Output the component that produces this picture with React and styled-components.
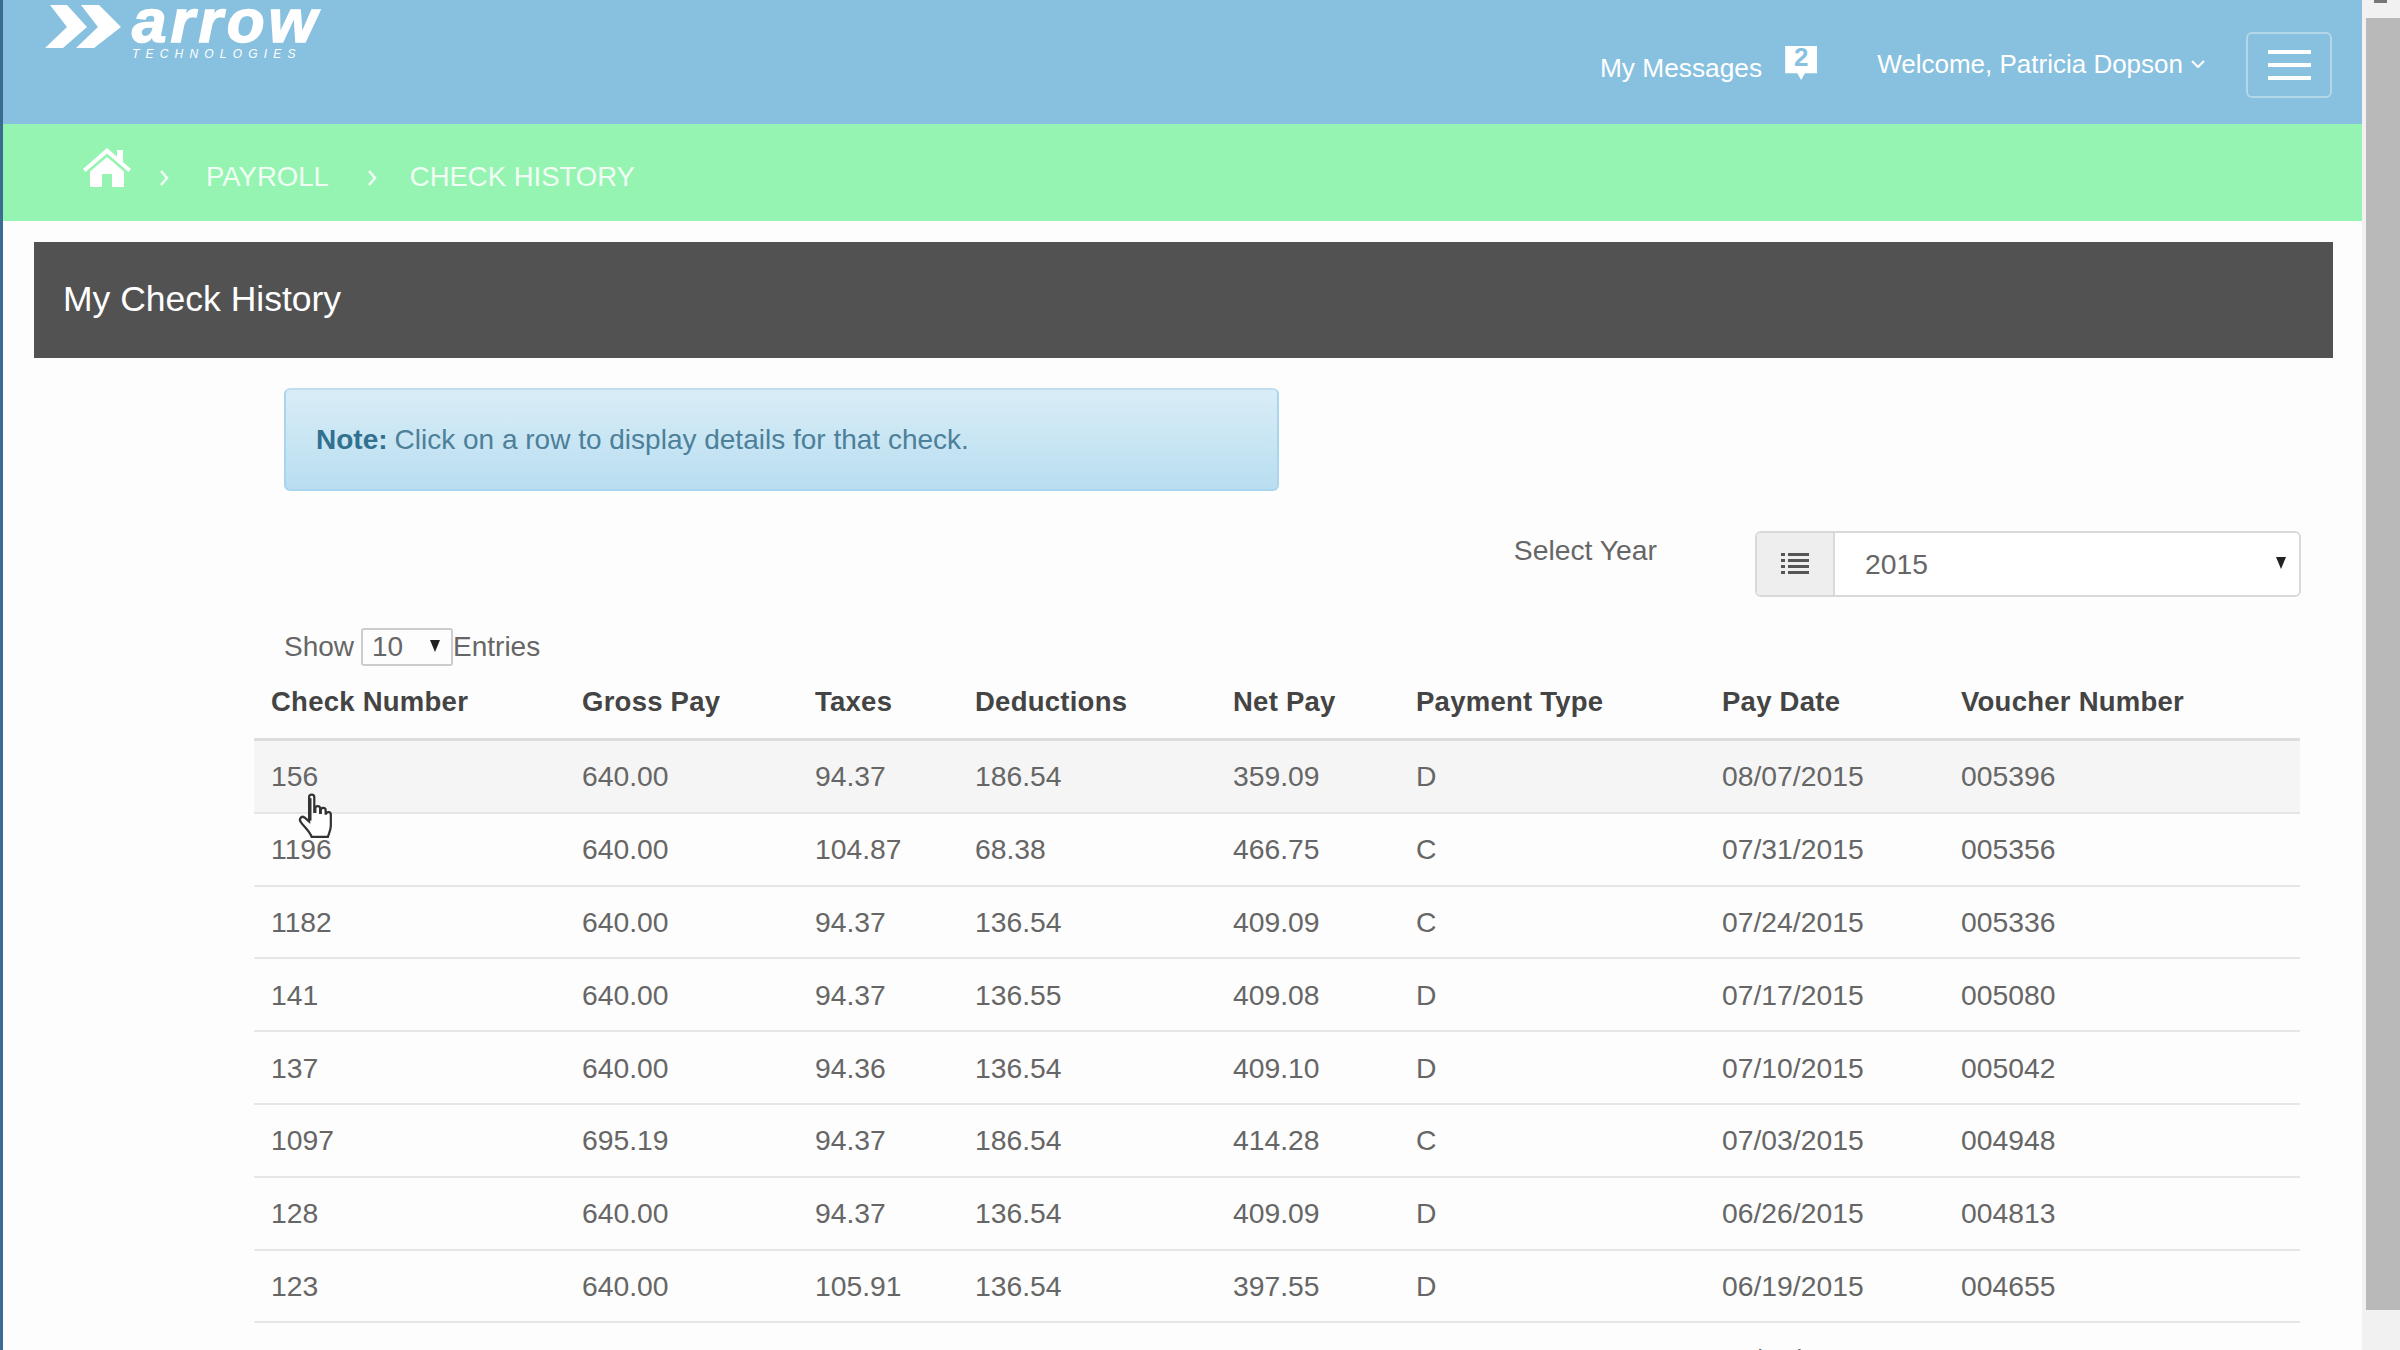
import React from 'react';
import styled, { createGlobalStyle } from 'styled-components';

const GlobalStyle = createGlobalStyle`
  html, body {
    margin: 0;
    padding: 0;
    height: 100%;
    overflow: hidden;
    background: #fff;
    font-family: "Liberation Sans", Arial, sans-serif;
  }
`;

const Page = styled.div`
  display: flex;
  width: 2400px;
  height: 1350px;
  overflow: hidden;
`;

const Main = styled.div`
  width: 2362px;
  flex-shrink: 0;
  box-sizing: border-box;
  border-left: 3px solid #3a6c92;
  background: #fdfdfd;
`;

const Header = styled.header`
  display: flex;
  justify-content: space-between;
  height: 124px;
  background: #88c1df;
  color: #fff;
`;

const Logo = styled.div`
  display: flex;
  gap: 11px;
  padding: 5px 0 0 42px;
`;

const LogoWords = styled.div`
  display: flex;
  flex-direction: column;
`;

const LogoName = styled.span`
  font-size: 62px;
  font-weight: bold;
  font-style: italic;
  line-height: 32px;
  height: 38px;
  letter-spacing: 4px;
  -webkit-text-stroke: 1.5px #fff;
`;

const LogoTag = styled.span`
  font-size: 12px;
  font-style: italic;
  line-height: 14px;
  letter-spacing: 6.2px;
  margin-top: 4px;
`;

const HeaderRight = styled.div`
  display: flex;
  align-items: flex-start;
  padding: 32px 30px 0 0;
`;

const MessagesLink = styled.span`
  font-size: 26.3px;
  line-height: 30px;
  margin-top: 21px;
`;

const MessageBadge = styled.span`
  width: 32px;
  height: 34px;
  margin: 14px 60px 0 23px;
  background: #fff;
  color: #88c1df;
  font-size: 26px;
  font-weight: bold;
  line-height: 22px;
  text-align: center;
  clip-path: polygon(0 0, 100% 0, 100% 80%, 62% 80%, 50% 100%, 38% 80%, 0 80%);
`;

const Welcome = styled.span`
  display: flex;
  align-items: center;
  gap: 8px;
  font-size: 26px;
  line-height: 30px;
  margin-top: 17px;
`;

const MenuButton = styled.button`
  display: flex;
  flex-direction: column;
  justify-content: center;
  align-items: center;
  gap: 9px;
  width: 86px;
  height: 66px;
  margin-left: 41px;
  padding: 0;
  background: transparent;
  border: 2px solid #b3d6e8;
  border-radius: 6px;
`;

const MenuBar = styled.span`
  display: block;
  width: 43px;
  height: 4px;
  background: #fff;
`;

const Breadcrumb = styled.nav`
  display: flex;
  align-items: center;
  height: 97px;
  padding-left: 80px;
  background: #95f4b2;
  color: #f1fdf4;
  font-size: 27.5px;
`;

const CrumbSep = styled.svg`
  width: 10px;
  height: 16px;
  margin: 11px 0 0 ${(p) => p.$left}px;
`;

const CrumbText = styled.span`
  margin-left: ${(p) => p.$left}px;
  margin-top: 9px;
`;

const HomeIcon = styled.svg`
  width: 48px;
  height: 40px;
  margin-top: -12px;
`;

const Panel = styled.section`
  margin: 21px 29px 0 31px;
`;

const TitleBar = styled.div`
  display: flex;
  align-items: center;
  height: 116px;
  padding: 0 0 2px 29px;
  box-sizing: border-box;
  background: #525252;
  color: #fff;
  font-size: 35.5px;
`;

const Alert = styled.div`
  display: flex;
  align-items: center;
  box-sizing: border-box;
  width: 995px;
  height: 103px;
  margin: 30px 0 0 250px;
  padding-left: 30px;
  background: linear-gradient(to bottom, #d9edf7, #b9def0);
  border: 2px solid #a9d6ee;
  border-top-color: #c0deee;
  border-radius: 6px;
  color: #4d8099;
  font-size: 28px;
  strong {
    color: #31708f;
    margin-right: 7px;
  }
`;

const YearRow = styled.div`
  display: flex;
  justify-content: flex-end;
  align-items: flex-start;
  margin: 40px 32px 0 0;
  color: #666;
  font-size: 28.3px;
`;

const YearLabel = styled.label`
  line-height: 32px;
  margin: 3px 98px 0 0;
`;

const YearGroup = styled.div`
  display: flex;
  box-sizing: border-box;
  width: 546px;
  height: 66px;
  background: #fff;
  border: 2px solid #d9d9d9;
  border-radius: 6px;
  overflow: hidden;
`;

const YearAddon = styled.span`
  display: flex;
  align-items: center;
  justify-content: center;
  width: 76px;
  background: #eee;
  border-right: 2px solid #d9d9d9;
`;

const YearValue = styled.span`
  display: flex;
  flex: 1;
  align-items: center;
  justify-content: space-between;
  padding: 0 13px 0 30px;
`;

const Caret = styled.span`
  width: 0;
  height: 0;
  margin-top: -3px;
  border-left: 5px solid transparent;
  border-right: 5px solid transparent;
  border-top: 12px solid #222;
`;

const EntriesRow = styled.div`
  display: flex;
  align-items: center;
  gap: 7px;
  margin: 31px 0 -1px 250px;
  height: 38px;
  color: #666;
  font-size: 28px;
`;

const EntriesSelect = styled.span`
  display: flex;
  align-items: center;
  justify-content: space-between;
  box-sizing: border-box;
  width: 92px;
  height: 38px;
  padding: 0 11px 0 9px;
  margin-right: -7px;
  border: 2px solid #ccc;
  border-radius: 3px;
`;

const CursorWrap = styled.div`
  position: relative;
`;

const HandCursor = styled.svg`
  position: absolute;
  left: 263px;
  top: 128px;
  width: 38px;
  height: 50px;
`;

const Table = styled.table`
  width: 2046px;
  margin-left: 220px;
  border-collapse: collapse;
  table-layout: fixed;
  color: #666;
  font-size: 28.3px;
`;

const HeadCell = styled.th`
  height: 73px;
  padding: 0 0 0 17px;
  text-align: left;
  font-size: 27.5px;
  letter-spacing: 0.25px;
  color: #444;
  border-bottom: 3px solid #ddd;
`;

const Row = styled.tr`
  background: ${(p) => (p.$active ? '#f5f5f5' : 'transparent')};
`;

const Cell = styled.td`
  height: 69.8px;
  padding: 1px 0 0 17px;
  border-bottom: 2px solid #e6e6e6;
`;

const Scrollbar = styled.aside`
  display: flex;
  flex-direction: column;
  flex: 1;
  align-items: flex-end;
  background: #f1f1f1;
`;

const ScrollArrow = styled.span`
  width: 13px;
  height: 3px;
  margin: 0 13px 15px 0;
  background: #777;
`;

const ScrollThumb = styled.div`
  width: 34px;
  height: 1292px;
  background: #b9b9b9;
`;

const columns = [311, 233, 160, 258, 183, 306, 239, 356];

const heads = [
  'Check Number',
  'Gross Pay',
  'Taxes',
  'Deductions',
  'Net Pay',
  'Payment Type',
  'Pay Date',
  'Voucher Number',
];

const rows = [
  ['156', '640.00', '94.37', '186.54', '359.09', 'D', '08/07/2015', '005396'],
  ['1196', '640.00', '104.87', '68.38', '466.75', 'C', '07/31/2015', '005356'],
  ['1182', '640.00', '94.37', '136.54', '409.09', 'C', '07/24/2015', '005336'],
  ['141', '640.00', '94.37', '136.55', '409.08', 'D', '07/17/2015', '005080'],
  ['137', '640.00', '94.36', '136.54', '409.10', 'D', '07/10/2015', '005042'],
  ['1097', '695.19', '94.37', '186.54', '414.28', 'C', '07/03/2015', '004948'],
  ['128', '640.00', '94.37', '136.54', '409.09', 'D', '06/26/2015', '004813'],
  ['123', '640.00', '105.91', '136.54', '397.55', 'D', '06/19/2015', '004655'],
  ['116', '640.00', '105.00', '140.00', '393.94', 'D', '06/12/2015', '004573'],
];

const Chevron = ({ left }) => (
  <CrumbSep $left={left} viewBox="0 0 10 16">
    <path d="M2 1l6 7-6 7" fill="none" stroke="#f1fdf4" strokeWidth="2.6" />
  </CrumbSep>
);

const App = () => {
  return (
    <Page>
      <GlobalStyle />
      <Main>
        <Header>
          <Logo>
            <svg width="76" height="44" viewBox="0 0 76 44">
              <path d="M0 43L22 22 5 0h17l20 22-24 21zM31 43l22-21L36 0h18l22 22-27 21z" fill="#fff" />
            </svg>
            <LogoWords>
              <LogoName>arrow</LogoName>
              <LogoTag>TECHNOLOGIES</LogoTag>
            </LogoWords>
          </Logo>
          <HeaderRight>
            <MessagesLink>My Messages</MessagesLink>
            <MessageBadge>2</MessageBadge>
            <Welcome>
              Welcome, Patricia Dopson
              <svg width="14" height="9" viewBox="0 0 14 9">
                <path d="M1 1l6 6 6-6" fill="none" stroke="#fff" strokeWidth="2" />
              </svg>
            </Welcome>
            <MenuButton aria-label="Menu">
              <MenuBar />
              <MenuBar />
              <MenuBar />
            </MenuButton>
          </HeaderRight>
        </Header>

        <Breadcrumb>
          <HomeIcon viewBox="0 0 48 40">
            <path
              d="M24 1L0 22l2.5 3L24 6.500 45.500 25l2.500-3-8-7V3h-6v6.800zM24 10L7 24.500V40h12V27h10v13h12V24.500z"
              fill="#fff"
            />
          </HomeIcon>
          <Chevron left={28} />
          <CrumbText $left={37}>PAYROLL</CrumbText>
          <Chevron left={38} />
          <CrumbText $left={33}>CHECK HISTORY</CrumbText>
        </Breadcrumb>

        <Panel>
          <TitleBar>My Check History</TitleBar>
          <Alert>
            <strong>Note:</strong> Click on a row to display details for that check.
          </Alert>
          <YearRow>
            <YearLabel>Select Year</YearLabel>
            <YearGroup>
              <YearAddon>
                <svg width="28" height="24" viewBox="0 0 28 24">
                  <path
                    d="M0 1h4v3H0zM7 1h21v3H7zM0 7h4v3H0zM7 7h21v3H7zM0 13h4v3H0zM7 13h21v3H7zM0 19h4v3H0zM7 19h21v3H7z"
                    fill="#555"
                  />
                </svg>
              </YearAddon>
              <YearValue>
                2015
                <Caret />
              </YearValue>
            </YearGroup>
          </YearRow>
          <EntriesRow>
            Show
            <EntriesSelect>
              10
              <Caret />
            </EntriesSelect>
            Entries
          </EntriesRow>
          <CursorWrap>
            <Table>
              <colgroup>
                {columns.map((w, i) => (
                  <col key={i} width={w} />
                ))}
              </colgroup>
              <thead>
                <tr>
                  {heads.map((h) => (
                    <HeadCell key={h}>{h}</HeadCell>
                  ))}
                </tr>
              </thead>
              <tbody>
                {rows.map((row, i) => (
                  <Row key={row[0]} $active={i === 0}>
                    {row.map((value, j) => (
                      <Cell key={j}>{value}</Cell>
                    ))}
                  </Row>
                ))}
              </tbody>
            </Table>
            <HandCursor viewBox="0 0 22 29">
              <path
                d="M7 2.500a1.500 1.500 0 0 1 3 0V11h.6V9a1.400 1.400 0 0 1 2.800 0v2.500h.4V10a1.400 1.400 0 0 1 2.800 0v2h.3a1.400 1.400 0 0 1 2.700.4V19c0 2.500-1 4-1.700 6.500H8.500C7.500 22.500 4.500 20 2.300 17 .8 15 2.500 13 4.300 14.200L7 16.500z"
                fill="#fff"
                stroke="#333"
                strokeWidth="1.3"
              />
              <path d="M7.800 3v13" stroke="#333" strokeWidth="1.2" />
            </HandCursor>
          </CursorWrap>
        </Panel>
      </Main>
      <Scrollbar>
        <ScrollArrow />
        <ScrollThumb />
      </Scrollbar>
    </Page>
  );
};

export default App;
